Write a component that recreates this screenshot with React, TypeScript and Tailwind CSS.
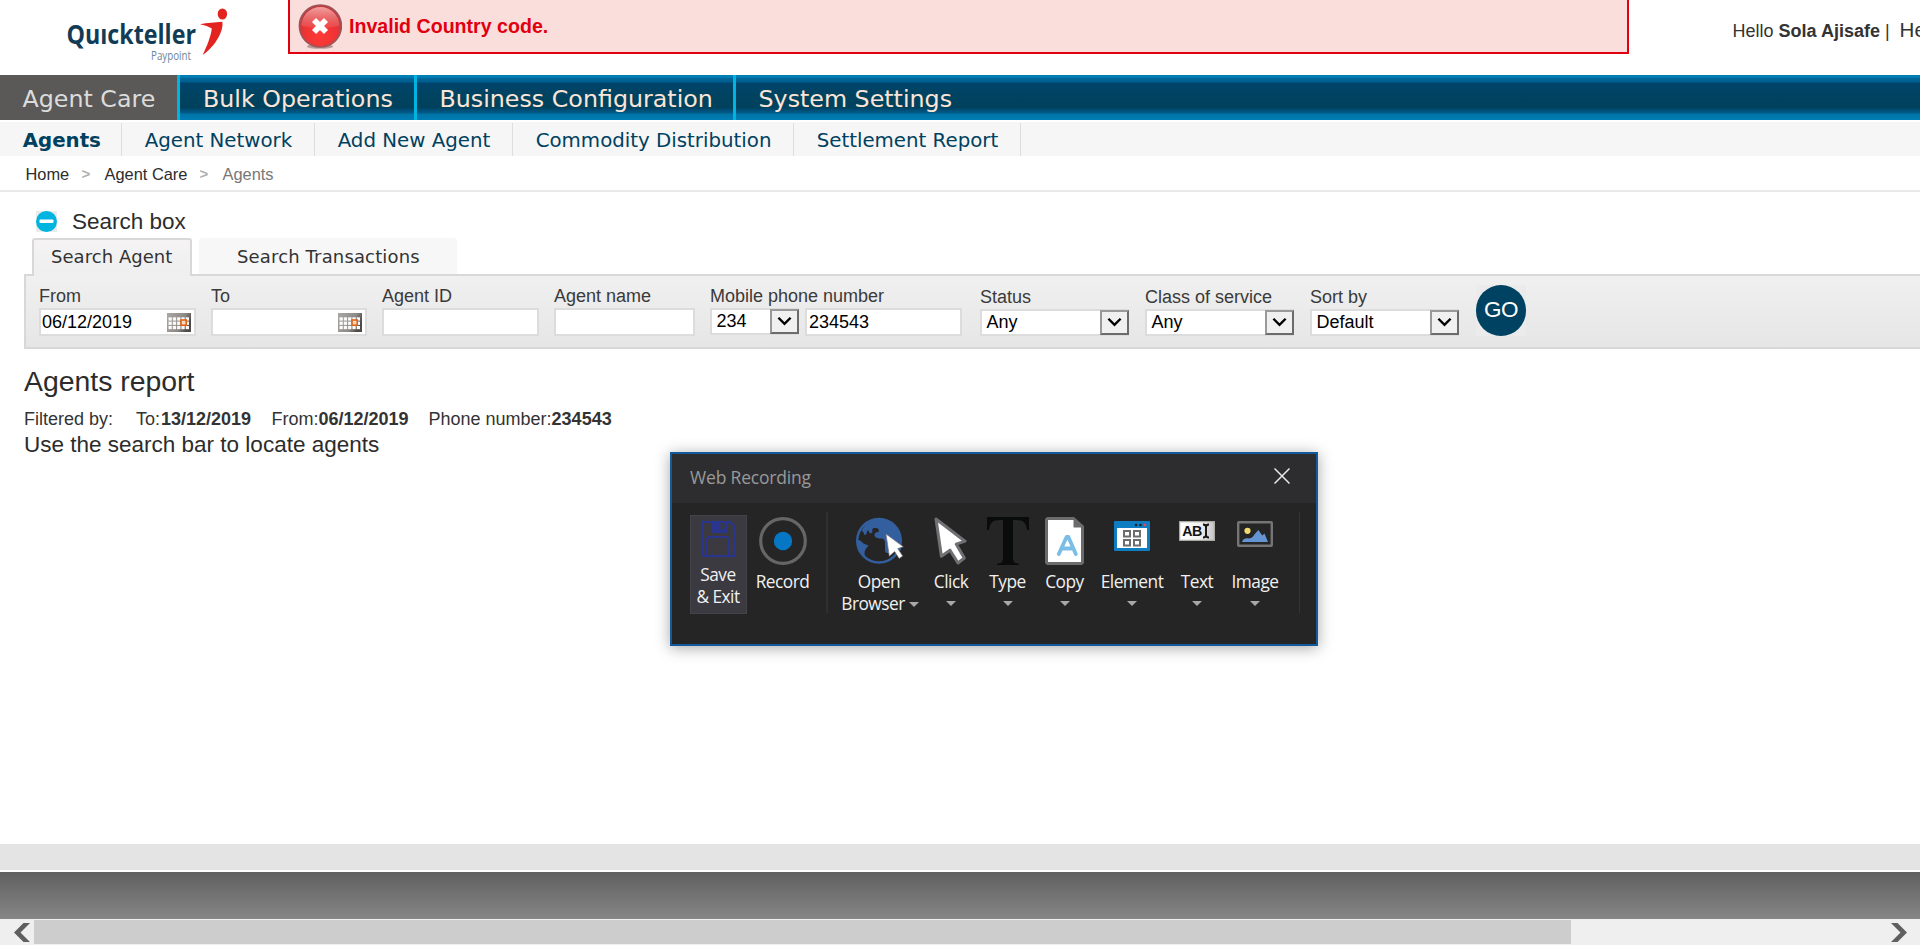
import React from "react";

const ARIAL = "font-['Liberation_Sans',Arial,sans-serif]";
const VERDANA = "font-['DejaVu_Sans',Verdana,sans-serif]";
const SEGOE = "font-['Open_Sans','Noto_Sans',sans-serif]";

function Logo() {
  return (
    <svg className="mt-[4px] ml-[60px] h-[62px] w-[180px] shrink-0" viewBox="60 4 180 62">
      <text x="66.5" y="44" textLength="129.5" lengthAdjust="spacingAndGlyphs" fontFamily="Open Sans, sans-serif" fontWeight="700" fontSize="26" fill="#123c55">
        Quıckteller
      </text>
      <text x="151" y="60" textLength="40" lengthAdjust="spacingAndGlyphs" fontFamily="Open Sans, sans-serif" fontSize="13" fill="#6d8799">
        Paypoint
      </text>
      <ellipse cx="222.4" cy="14" rx="4.7" ry="5.6" fill="#e2231f" />
      <path d="M200 24.3 C207 22.3 215 23 222.3 21.8 C224 30 216 46 202.7 55 C207 46 211 36 211.8 28.5 C208 26.3 204 25.2 200 24.3Z" fill="#e2231f" />
    </svg>
  );
}

function ErrorBadge() {
  return (
    <svg className="mt-[4px] ml-[8px] h-[46px] w-[44px] shrink-0" viewBox="0 0 44 46">
      <defs>
        <radialGradient id="badge" cx="50%" cy="72%" r="62%">
          <stop offset="0" stopColor="#ff3a36" />
          <stop offset="0.6" stopColor="#ee3434" />
          <stop offset="1" stopColor="#c4373c" />
        </radialGradient>
        <linearGradient id="gloss" x1="0" y1="0" x2="0" y2="1">
          <stop offset="0" stopColor="#f3a0a0" />
          <stop offset="1" stopColor="#ec5a5b" stopOpacity="0.5" />
        </linearGradient>
      </defs>
      <ellipse cx="22" cy="42.5" rx="13" ry="2.3" fill="#9b7c7c" opacity="0.7" />
      <circle cx="22.4" cy="22" r="21" fill="url(#badge)" stroke="#9c5558" strokeWidth="1.6" />
      <path d="M3.4 22 A19 19 0 0 1 41.4 22 Q22 26 3.4 22Z" fill="url(#gloss)" />
      <path d="M16 16 L28 28 M28 16 L16 28" stroke="#fff" strokeWidth="5.8" />
    </svg>
  );
}

function Header() {
  return (
    <header className="flex h-[75px] shrink-0 items-start">
      <Logo />
      <div className="ml-[48px] flex h-[54px] w-[1341px] shrink-0 items-start border-2 border-t-0 border-[#e0000f] bg-[#fadedb]">
        <ErrorBadge />
        <span className="mt-[15px] ml-[7px] text-[19.6px] leading-[22px] font-bold text-[#e0000f]">Invalid Country code.</span>
      </div>
      <div className="mt-[19px] ml-[103.5px] flex w-[187px] items-baseline overflow-hidden text-[18px] leading-[22px] whitespace-pre text-[#333]">
        <span>Hello <b>Sola Ajisafe</b> |</span>
        <span className="ml-[10px] text-[20.5px]">He</span>
      </div>
    </header>
  );
}

const mainTabs = [
  { label: "Agent Care", cls: "w-[177px] bg-[#5b5858] pl-[22.5px] text-[#dcdcdc]" },
  { label: "Bulk Operations", cls: "w-[237px] border-l-[3px] border-[#00b4e0] pl-[23px] text-[#fbe5d8]" },
  { label: "Business Configuration", cls: "w-[319px] border-l-[3px] border-[#00b4e0] pl-[22.5px] text-[#fbe5d8]" },
  { label: "System Settings", cls: "w-[300px] border-l-[3px] border-[#00b4e0] pl-[22.5px] text-[#fbe5d8]" },
];

const subTabs = [
  { label: "Agents", cls: "w-[122px] font-bold" },
  { label: "Agent Network", cls: "w-[193px]" },
  { label: "Add New Agent", cls: "w-[198px]" },
  { label: "Commodity Distribution", cls: "w-[281px]" },
  { label: "Settlement Report", cls: "w-[227px]" },
];

function Nav() {
  return (
    <>
      <nav className={`${VERDANA} flex h-[45px] shrink-0 bg-[linear-gradient(#0080b8_0px,#007ab0_3px,#00699a_3px,#005f90_7px,#00446c_8px,#004360_20px,#00425c_33px,#00486f_34px,#005c88_38px,#0073a6_39px,#007db5_45px)] text-[23.75px]`}>
        {mainTabs.map((t) => (
          <a key={t.label} className={`${t.cls} pt-px leading-[47px] whitespace-nowrap`}>{t.label}</a>
        ))}
      </nav>
      <nav className={`${VERDANA} mt-[2px] flex h-[34px] shrink-0 bg-[#f6f6f6] text-[19.8px] text-[#00415f]`}>
        {subTabs.map((t) => (
          <a key={t.label} className={`${t.cls} mt-[1px] border-r border-[#dedede] pl-[22.7px] leading-[35px] whitespace-nowrap`}>{t.label}</a>
        ))}
      </nav>
      <div className="flex h-[36px] shrink-0 border-b-2 border-[#e9e9e9] pl-[25.5px] text-[16.4px] leading-[37px] text-[#2c2c2c]">
        <span className="w-[56px]">Home</span>
        <span className="w-[23px] text-[15px] leading-[36px] font-bold text-[#b0b0b0]">&gt;</span>
        <span className="w-[95px]">Agent Care</span>
        <span className="w-[23px] text-[15px] leading-[36px] font-bold text-[#b0b0b0]">&gt;</span>
        <span className="text-[#777]">Agents</span>
      </div>
    </>
  );
}

function CalendarIcon() {
  return (
    <svg className="h-[19px] w-[24px]" viewBox="0 0 24 19">
      <defs>
        <linearGradient id="cal" x1="0" y1="0" x2="1" y2="0.4">
          <stop offset="0" stopColor="#aaa8a6" />
          <stop offset="0.7" stopColor="#8d8986" />
          <stop offset="1" stopColor="#4f4a48" />
        </linearGradient>
      </defs>
      <rect width="24" height="19" fill="url(#cal)" />
      {[4.3, 8.6, 12.9].map((y) =>
        [1.5, 5.8, 10.1, 14.4, 18.7].map((x) => <rect key={`${x}-${y}`} x={x} y={y} width="3.3" height="3.3" fill="#fbfaf9" />)
      )}
      <rect x="14" y="7" width="5.2" height="5.2" fill="#fbd9bf" stroke="#dd6418" strokeWidth="1.6" />
    </svg>
  );
}

function Field({ label, value, cls, calendar }: { label: string; value?: string; cls: string; calendar?: boolean }) {
  return (
    <div className={`${cls} shrink-0`}>
      <div className="h-[24px] text-[18px] leading-[24px] whitespace-nowrap text-[#3a3a3a]">{label}</div>
      <div className="flex h-[28px] items-center justify-between border-2 border-[#dcdcdc] bg-white pr-[3px] pl-[1px]">
        <span className="text-[18px] text-black">{value}</span>
        {calendar && <CalendarIcon />}
      </div>
    </div>
  );
}

function Select({ value, cls }: { value: string; cls: string }) {
  return (
    <div className={`${cls} flex h-[27px] items-stretch border-2 border-r-0 border-[#dcdcdc] bg-white pl-[4.5px]`}>
      <span className="flex-1 text-[18px] leading-[23px] text-black">{value}</span>
      <span className="-my-px flex w-[29px] items-center justify-center border-2 border-t-[#999] border-r-[#6b6b6b] border-b-[#6b6b6b] border-l-[#999] bg-[#f0f0f0]">
        <svg className="h-[11px] w-[15px]" viewBox="0 0 16 11">
          <path d="M1.5 1.5 L8 8 L14.5 1.5" fill="none" stroke="#000" strokeWidth="2.6" />
        </svg>
      </span>
    </div>
  );
}

function SelectField({ label, value, cls }: { label: string; value: string; cls: string }) {
  return (
    <div className={`${cls} w-[150px] shrink-0`}>
      <div className="h-[25px] text-[18px] leading-[26px] whitespace-nowrap text-[#3a3a3a]">{label}</div>
      <Select value={value} cls="w-[149px]" />
    </div>
  );
}

function SearchPanel() {
  return (
    <section className="shrink-0">
      <div className="mt-[17px] flex h-[26px] items-center pl-[36px]">
        <svg className="mb-px h-[21px] w-[21px]" viewBox="0 0 21 21">
          <rect width="21" height="21" fill="#ebebeb" />
          <circle cx="10.5" cy="10.5" r="10.5" fill="#00b4e0" />
          <rect x="3.5" y="8.5" width="14" height="3.6" rx="1" fill="#fff" />
        </svg>
        <h2 className="mb-px ml-[15px] text-[22.5px] leading-[25px] text-[#2c2c2c]">Search box</h2>
      </div>
      <div className={`${VERDANA} mt-[3px] flex h-[36px] pl-[32px] text-[18px] text-[#333]`}>
        <div className="relative z-10 h-[38px] w-[160px] rounded-t-[3px] border-2 border-b-0 border-[#d8d8d8] bg-[linear-gradient(#f5f3f3,#efefef)] pl-[17px] leading-[33px] tracking-[0.05px] whitespace-nowrap">Search Agent</div>
        <div className="ml-[7px] w-[258px] rounded-t-[3px] bg-[#f7f7f7] pl-[38px] leading-[37px] tracking-[0.15px] whitespace-nowrap">Search Transactions</div>
      </div>
      <div className="ml-[24px] flex h-[75px] items-start border-2 border-r-0 border-[#d8d8d8] bg-[linear-gradient(#f0f0f0,#e6e6e6)] pt-[8px] pl-[13px]">
        <Field label="From" value="06/12/2019" cls="w-[157px]" calendar />
        <Field label="To" cls="ml-[15px] w-[156px]" calendar />
        <Field label="Agent ID" cls="ml-[15px] w-[157px]" />
        <Field label="Agent name" cls="ml-[15px] w-[141px]" />
        <div className="ml-[15px] w-[252px] shrink-0">
          <div className="h-[24px] text-[18px] leading-[24px] text-[#3a3a3a]">Mobile phone number</div>
          <div className="flex">
            <Select value="234" cls="w-[89px]" />
            <div className="ml-[6px] flex h-[28px] w-[157px] items-center border-2 border-[#dcdcdc] bg-white pl-[2px] text-[18px] text-black">234543</div>
          </div>
        </div>
        <SelectField label="Status" value="Any" cls="ml-[18px]" />
        <SelectField label="Class of service" value="Any" cls="ml-[15px]" />
        <SelectField label="Sort by" value="Default" cls="ml-[15px]" />
        <button className="mt-px ml-[15.5px] shrink-0 bg-[#ebebeb]">
          <span className="flex h-[51px] w-[50px] items-center justify-center rounded-full bg-[#004261] pb-px pl-px text-[22.5px] tracking-[-0.4px] text-white">GO</span>
        </button>
      </div>
    </section>
  );
}

function Report() {
  return (
    <section className="shrink-0 pl-[24px] text-[#2c2c2c]">
      <h1 className="mt-[16px] text-[28.4px] leading-[33px]">Agents report</h1>
      <div className="mt-[9px] flex text-[18px] leading-[24px] text-[#333]">
        <span className="w-[112px]">Filtered by:</span>
        <span className="w-[135.5px]">To:<b className="ml-px">13/12/2019</b></span>
        <span className="w-[157px]">From:<b>06/12/2019</b></span>
        <span>Phone number:<b>234543</b></span>
      </div>
      <p className="text-[22.5px] leading-[28px]">Use the search bar to locate agents</p>
    </section>
  );
}

const Caret = () => (
  <svg className="h-[5px] w-[10px]" viewBox="0 0 10 5"><path d="M0 0H10L5 5Z" fill="#a8a8a8" /></svg>
);

const SaveIcon = () => (
  <svg className="h-[36px] w-[34px]" viewBox="0 0 34 36" fill="none" stroke="#2a3590" strokeWidth="2">
    <path d="M1 1H29L33 5V35H3L1 33Z" />
    <path d="M6 35V18L8 16H26L28 18V35" />
    <path d="M10 2H26V12H10Z" fill="#2a3590" stroke="none" />
    <path d="M19.5 2H23.5V8.5H19.5Z" fill="#3a3a40" stroke="none" />
  </svg>
);
const RecordIcon = () => (
  <svg className="h-[48px] w-[48px]" viewBox="0 0 48 48">
    <circle cx="24" cy="24" r="22.3" fill="none" stroke="#666" strokeWidth="3.2" />
    <circle cx="24" cy="24" r="9.2" fill="#0677c4" />
  </svg>
);
const GlobeIcon = () => (
  <svg className="h-[48px] w-[48px] overflow-visible" viewBox="0 0 48 48">
    <circle cx="24" cy="23.7" r="21.8" fill="none" stroke="#345f9f" strokeWidth="2.4" />
    <path d="M6.7 14 C10 6 17 1.5 25 1.5 C36 2 45.5 10 46 22 L46 33 L38 35.5 L33 36 C31 36.5 30 35 30 33 V26 C30 22.5 28.5 21.3 26 21.5 C22 21.5 19 20 19.5 17.5 C20 15 22 15.5 23.7 14.7 V12 C22 10.5 18 10.5 17.3 12 C17.3 14.5 18 16 15.5 16.3 C13.5 16 14.5 13 12.5 13.5 C11.5 15 12 17.5 10 18 C8.5 17.5 9.5 15 6.7 14Z" fill="#345f9f" />
    <path d="M2 22.5 L6 24 L8.5 26.5 L13.5 28.5 L10.5 32.5 L9.5 35 L10 41 C4 36 1 29 2 22.5Z" fill="#345f9f" />
    <path d="M31 17 L48.3 29.8 L42.7 31.6 L47.7 39 L44.2 41.5 L39.6 34.5 L34.3 39.2Z" fill="#fff" stroke="#777" strokeWidth="0.7" />
  </svg>
);
const ClickIcon = () => (
  <svg className="h-[48px] w-[34px]" viewBox="0 0 34 48">
    <path d="M2 2 L31 24.2 L22.3 27.2 L30.3 41 L24 46 L16 33.2 L7.4 39.2Z" fill="#fff" stroke="#707074" strokeWidth="3" strokeLinejoin="round" />
  </svg>
);
const TypeIcon = () => (
  <svg className="h-[48px] w-[42px]" viewBox="0 0 42 48">
    <path d="M0 0H42V13H40C39 6 37 3 29 3H26V40C26 45 27 46.5 32 46.5V48H10V46.5C15 46.5 16 45 16 40V3H13C5 3 3 6 2 13H0Z" fill="#0a0b0b" />
  </svg>
);
const CopyIcon = () => (
  <svg className="h-[48px] w-[39px]" viewBox="0 0 39 48">
    <path d="M2 0H29L39 9V46L37 48H2L0 46V2Z" fill="#6c6c6c" />
    <path d="M3 3H28.5V10.5H36V45H3Z" fill="#fff" />
    <path d="M13.8 37 L21.7 19.8 H23.3 L30.8 37 M16.5 31.5H28.5" fill="none" stroke="#7abde6" strokeWidth="3.8" strokeLinecap="round" strokeLinejoin="round" />
  </svg>
);
const ElementIcon = () => (
  <svg className="h-[30px] w-[36px]" viewBox="0 0 36 30">
    <rect width="36" height="30" rx="1" fill="#0e7dc2" />
    <rect x="3" y="7" width="30" height="20" fill="#fff" />
    <circle cx="22" cy="4" r="1.3" fill="#222" /><circle cx="26.5" cy="4" r="1.3" fill="#222" /><circle cx="31" cy="4" r="1.4" fill="#ef3e5a" />
    <g fill="none" stroke="#6c6c6c" strokeWidth="2">
      <rect x="10" y="10" width="6" height="5.5" /><rect x="20" y="10" width="6" height="5.5" />
      <rect x="10" y="19" width="6" height="5.5" /><rect x="20" y="19" width="6" height="5.5" />
    </g>
  </svg>
);
const TextIcon = () => (
  <svg className="h-[20px] w-[36px]" viewBox="0 0 36 20">
    <defs>
      <linearGradient id="txt"><stop offset="0" stopColor="#fff" /><stop offset="0.6" stopColor="#f0f0f0" /><stop offset="1" stopColor="#c4c4c4" /></linearGradient>
    </defs>
    <rect x="0.6" y="0.6" width="34.8" height="18.8" fill="url(#txt)" stroke="#aaa9a2" strokeWidth="1.3" />
    <text x="3.2" y="15.2" textLength="19.5" lengthAdjust="spacingAndGlyphs" fontFamily="Liberation Sans, sans-serif" fontWeight="700" fontSize="14" fill="#111">AB</text>
    <path d="M24 3.5 Q27 3.5 27 6 V14 Q27 16.5 24 16.5 M30 3.5 Q27 3.5 27 6 M30 16.5 Q27 16.5 27 14" fill="none" stroke="#111" strokeWidth="1.9" />
  </svg>
);
const ImageIcon = () => (
  <svg className="h-[26px] w-[36px]" viewBox="0 0 36 26">
    <rect x="1.2" y="1.2" width="33.6" height="23.6" rx="0.6" fill="#252525" stroke="#757575" strokeWidth="2.4" />
    <circle cx="10.5" cy="9.8" r="3.1" fill="#f3da6c" />
    <path d="M5 21 C6 17.5 9 17 12 17.5 C15 17 16 16 17 14 L21.3 9 L25.3 14.5 L27.5 12.5 L31 21Z" fill="#6594d2" />
  </svg>
);

const tools = [
  { label: "Click", cls: "w-[68px]", icon: <ClickIcon />, pad: "" },
  { label: "Type", cls: "w-[45px]", icon: <TypeIcon />, pad: "" },
  { label: "Copy", cls: "w-[69px]", icon: <CopyIcon />, pad: "" },
  { label: "Element", cls: "w-[66px]", icon: <ElementIcon />, pad: "pt-[4px]" },
  { label: "Text", cls: "w-[64px]", icon: <TextIcon />, pad: "pt-[4px]" },
  { label: "Image", cls: "w-[52px]", icon: <ImageIcon />, pad: "pt-[4px]" },
];

function RecorderDialog() {
  return (
    <div className={`${SEGOE} absolute top-[452px] left-[670px] z-20 h-[194px] w-[648px] border-2 border-[#125a9a] bg-[#252525] shadow-[0_2px_14px_rgba(0,0,0,0.35)]`}>
      <div className="flex h-[49px] items-center justify-between bg-[#2d2d30] pr-[26px] pl-[18px]">
        <span className="mb-[3px] text-[17.5px] leading-[24px] tracking-[-0.18px] text-[#999]">Web Recording</span>
        <svg className="mb-[6px] h-[16px] w-[16px]" viewBox="0 0 16 16"><path d="M0.5 0.5L15.5 15.5M15.5 0.5L0.5 15.5" stroke="#e8e8e8" strokeWidth="1.5" /></svg>
      </div>
      <div className="flex items-start pt-[9px] pl-[18px] text-[17.3px] leading-[22px] tracking-[-0.5px] text-[#f1f1f1]">
        <div className="mt-[3px] flex h-[99px] w-[57px] flex-col items-center border border-[#434349] bg-[#3a3a40] pt-[5px] pr-px text-center">
          <SaveIcon />
          <span className="mt-[7px] whitespace-nowrap">Save<br />&amp; Exit</span>
        </div>
        <div className="mt-[5px] ml-[3.5px] flex w-[64px] flex-col items-center">
          <RecordIcon />
          <span className="mt-[6px]">Record</span>
        </div>
        <div className="ml-[11.5px] h-[101px] w-[2px] bg-[#2f2f32]" />
        <div className="mt-[5px] ml-[13px] flex w-[75px] flex-col items-center">
          <GlobeIcon />
          <span className="mt-[6px] pl-px">Open</span>
          <span className="flex items-center gap-[4px] pl-[3px]">Browser <Caret /></span>
        </div>
        <div className="w-px" />
        {tools.map((t) => (
          <div key={t.label} className={`${t.cls} mt-[5px] flex flex-col items-center`}>
            <div className={`${t.pad} h-[48px]`}>{t.icon}</div>
            <span className="mt-[6px] mb-[8px]">{t.label}</span>
            <Caret />
          </div>
        ))}
        <div className="ml-[18px] h-[101px] w-px bg-[#333336]" />
      </div>
    </div>
  );
}

function Footer() {
  return (
    <footer className="mt-auto shrink-0">
      <div className="h-[26px] bg-[#e4e4e4]" />
      <div className="mt-[2px] h-[47px] bg-[linear-gradient(#606060,#868686)]" />
      <div className="flex h-[26px] items-center bg-[#efefef]">
        <svg className="ml-[13.5px] h-[19px] w-[16px]" viewBox="0 0 16 19"><path d="M9.5 0H16L6.5 9.5L16 19H9.5L0 9.5Z" fill="#5f5f5f" /></svg>
        <div className="ml-[4.5px] h-[24px] w-[1537px] bg-[#cdcdcd]" />
        <svg className="mr-[13.5px] ml-auto h-[19px] w-[16px]" viewBox="0 0 16 19"><path d="M6.5 0H0L9.5 9.5L0 19H6.5L16 9.5Z" fill="#5f5f5f" /></svg>
      </div>
    </footer>
  );
}

export default function App() {
  return (
    <div className={`${ARIAL} relative flex h-[945px] w-[1920px] flex-col overflow-hidden bg-white`}>
      <Header />
      <Nav />
      <SearchPanel />
      <Report />
      <Footer />
      <RecorderDialog />
    </div>
  );
}
